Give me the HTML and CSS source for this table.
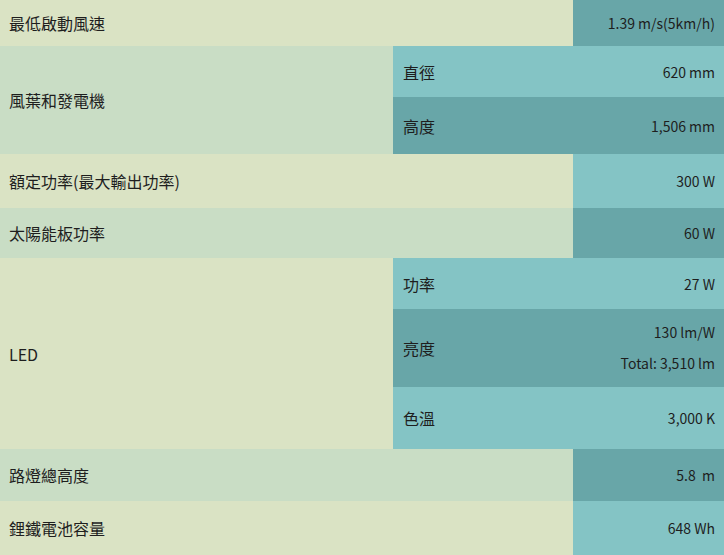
FILE: index.html
```html
<!DOCTYPE html>
<html lang="zh-Hant">
<head>
<meta charset="utf-8">
<link rel="stylesheet" href="styles.css">
</head>
<body>
<table class="spec">
  <colgroup>
    <col class="c-lbl">
    <col class="c-sub">
    <col class="c-val">
  </colgroup>
  <tr class="h46">
    <td class="lbl beige" colspan="2">最低啟動風速</td>
    <td class="val dark">1.39 m/s(5km/h)</td>
  </tr>
  <tr class="h51">
    <td class="lbl green" rowspan="2">風葉和發電機</td>
    <td class="sub light">直徑</td>
    <td class="val light">620 mm</td>
  </tr>
  <tr class="h57">
    <td class="sub dark">高度</td>
    <td class="val dark">1,506 mm</td>
  </tr>
  <tr class="h54">
    <td class="lbl beige" colspan="2">額定功率(最大輸出功率)</td>
    <td class="val light">300 W</td>
  </tr>
  <tr class="h50">
    <td class="lbl green" colspan="2">太陽能板功率</td>
    <td class="val dark">60 W</td>
  </tr>
  <tr class="h51">
    <td class="lbl beige" rowspan="3">LED</td>
    <td class="sub light">功率</td>
    <td class="val light">27 W</td>
  </tr>
  <tr class="h78">
    <td class="sub dark">亮度</td>
    <td class="val dark"><div class="line">130 lm/W</div><div class="line">Total: 3,510 lm</div></td>
  </tr>
  <tr class="h62">
    <td class="sub light">色溫</td>
    <td class="val light">3,000 K</td>
  </tr>
  <tr class="h52">
    <td class="lbl green" colspan="2">路燈總高度</td>
    <td class="val dark">5.8&nbsp; m</td>
  </tr>
  <tr class="h54">
    <td class="lbl beige" colspan="2">鋰鐵電池容量</td>
    <td class="val light">648 Wh</td>
  </tr>
</table>
</body>
</html>
```
FILE: styles.css
```css
html, body {
  margin: 0;
  padding: 0;
  background: #dbe3c4;
}
body {
  font-family: "Noto Sans CJK TC", "Noto Sans", sans-serif;
  color: #1e1e1e;
}
.spec {
  width: 724px;
  border-collapse: collapse;
  border-spacing: 0;
  table-layout: fixed;
}
.c-lbl { width: 393px; }
.c-sub { width: 180px; }
.c-val { width: 151px; }
.spec td {
  padding: 0 9px;
  vertical-align: middle;
}
.lbl {
  font-size: 16px;
}
.spec td.sub {
  font-size: 16px;
  padding-left: 10px;
}
.val {
  font-size: 14px;
  text-align: right;
}
.line {
  line-height: 31px;
}
.beige { background: #dae3c4; }
.green { background: #c9ddc5; }
.light { background: #84c4c5; }
.dark  { background: #68a6a8; }
.h46 { height: 46px; }
.h50 { height: 50px; }
.h51 { height: 51px; }
.h52 { height: 52px; }
.h54 { height: 54px; }
.h57 { height: 57px; }
.h62 { height: 62px; }
.h78 { height: 78px; }
```
